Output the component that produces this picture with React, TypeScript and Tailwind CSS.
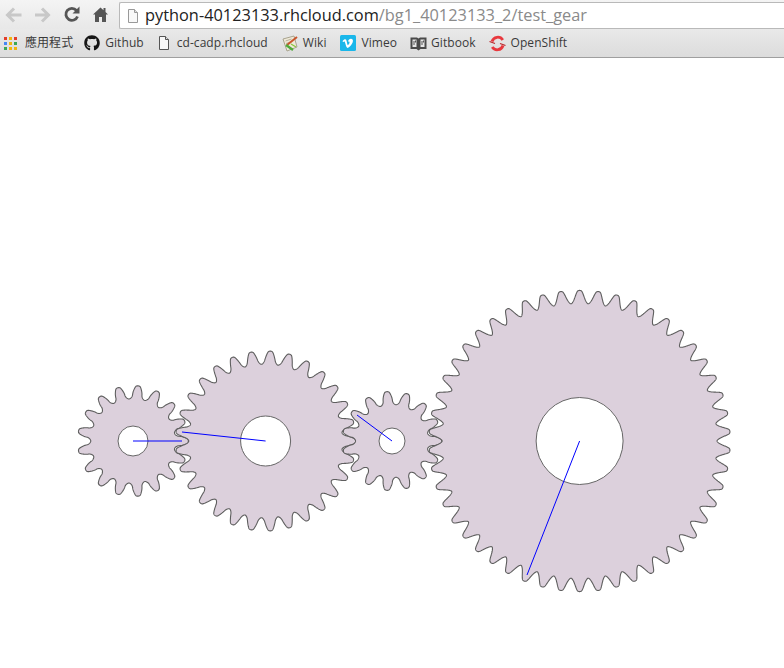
import React from "react";
import { FaGithub } from "react-icons/fa";

const m = 5.77;
const cy = 441 - 58;

function chaikin(pts: number[][], iterations: number) {
  let p = pts;
  for (let k = 0; k < iterations; k++) {
    const q: number[][] = [];
    for (let i = 0; i < p.length; i++) {
      const a = p[i];
      const b = p[(i + 1) % p.length];
      q.push([a[0] * 0.75 + b[0] * 0.25, a[1] * 0.75 + b[1] * 0.25]);
      q.push([a[0] * 0.25 + b[0] * 0.75, a[1] * 0.25 + b[1] * 0.75]);
    }
    p = q;
  }
  return p;
}

function gearPath(cx: number, N: number, phaseDeg: number) {
  const r = (N * m) / 2;
  const ro = r + m + 0.6;
  const rr = r - 1.3 * m;
  const pitch = (2 * Math.PI) / N;
  const base = N < 20 ? 0.29 : N < 40 ? 0.33 : 0.36;
  const flank: number[][] = [
    [r - 0.8 * m, pitch * base],
    [r - 0.1 * m, pitch * 0.26],
    [r + 0.65 * m, pitch * 0.17],
    [ro, pitch * 0.09],
  ];
  const pts: number[][] = [];
  for (let t = 0; t < N; t++) {
    const c = (phaseDeg * Math.PI) / 180 + t * pitch;
    pts.push([rr, c - pitch / 2]);
    flank.forEach(([R, a]) => pts.push([R, c - a]));
    [...flank].reverse().forEach(([R, a]) => pts.push([R, c + a]));
  }
  const xy = pts.map(([R, a]) => [cx + R * Math.cos(a), cy + R * Math.sin(a)]);
  const s = chaikin(xy, 3);
  return "M" + s.map((q) => q[0].toFixed(2) + " " + q[1].toFixed(2)).join("L") + "Z";
}

const gears = [
  { cx: 133, n: 17, phase: 0, hole: 15, end: [182, 441] },
  { cx: 265.6, n: 29, phase: 0, hole: 25, end: [182, 432] },
  { cx: 392, n: 15, phase: 0, hole: 13, end: [357, 415] },
  { cx: 579.6, n: 50, phase: 3.6, hole: 43.5, end: [527, 575] },
];

function AppsIcon() {
  const c = ["#e33e2b", "#f2b50f", "#e33e2b", "#4486f4", "#f2b50f", "#3aa757", "#3aa757", "#f2b50f", "#f2b50f"];
  return (
    <div className="ml-[1px] grid grid-cols-3 gap-[2px] w-[13px] h-[13px]">
      {c.map((x, i) => (
        <div key={i} style={{ background: x }} className="w-[3px] h-[3px]" />
      ))}
    </div>
  );
}

function FileIcon({ stroke = "#555" }: { stroke?: string }) {
  return (
    <svg width="12" height="16" viewBox="0 0 12 16">
      <path d="M1.500 1.500h6l3 3v10h-9z" fill="#f8f8f8" stroke={stroke} />
      <path d="M7.500 1.500v3h3" fill="#ddd" stroke={stroke} />
    </svg>
  );
}

function WikiIcon() {
  return (
    <svg width="17" height="17" viewBox="0 0 17 17">
      <path d="M1 4l11-3 3 11-10 4z" fill="#efe9d8" stroke="#a9a48f" />
      <path d="M3.500 6l6-2M4 8.500l4-1.300" stroke="#b9b39d" />
      <path d="M5 10L15 2" stroke="#c9552c" strokeWidth="2" />
      <path d="M4 10l7 5" stroke="#4faa3a" strokeWidth="2.400" fill="none" />
      <path d="M9 9l5 3" stroke="#8cc63f" strokeWidth="1.400" fill="none" />
    </svg>
  );
}

function VimeoIcon() {
  return (
    <svg width="16" height="16" viewBox="0 0 16 16">
      <rect width="16" height="16" rx="1.500" fill="#1ab7ea" />
      <path d="M2.500 6.200l.6.800c.8-.6 1.300-.8 1.600-.4.6 1.500 1 3.600 1.700 5.200.5 1.200 1.200 1.400 2.100.8 1.900-1.300 3.400-3.200 4.200-5.400.7-1.900-.1-3.400-1.800-3.400-1.400 0-2.500 1.100-3 3 1-.6 1.800-.3 1.600.9-.1.700-1 2.100-1.500 2.400-.6.300-.9-1.900-1.200-3.300-.4-2-.8-2.700-2-2.500-.8.200-1.600 1.200-2.300 1.900z" fill="#fff" />
    </svg>
  );
}

function BookIcon() {
  return (
    <svg width="17" height="15" viewBox="0 0 17 15">
      <path d="M0.500 1.500h6.500l1.500 1 1.500-1h6.500V13h-6l-2 1.500-2-1.500h-6z" fill="#4a4a4a" />
      <path d="M2.500 3.500h4v7.500h-4zM10.500 3.500h4v7.500h-4z" fill="#e6e6e6" />
      <path d="M4 5v4M5.500 4.500v2M12 5v4M13.500 4.500v2" stroke="#555" />
    </svg>
  );
}

function ShiftIcon() {
  return (
    <svg width="17" height="17" viewBox="0 0 17 17" fill="none">
      <path d="M3 6.500A6 6 0 0 1 13.800 5" stroke="#e8383e" strokeWidth="2.800" />
      <path d="M14 10.500A6 6 0 0 1 3.200 12" stroke="#e8383e" strokeWidth="2.800" />
      <path d="M0.500 6.500l5.500 2M16.500 10.500l-5.500-2" stroke="#b9252a" strokeWidth="1.300" />
    </svg>
  );
}

function Bookmark({ icon, label, gap, after }: { icon: React.ReactNode; label: string; gap: string; after: string }) {
  return (
    <div className={"flex items-center " + after}>
      {icon}
      <span className={"text-[12px] leading-none tracking-[0.06px] text-[#3a3a3a] whitespace-nowrap " + gap}>{label}</span>
    </div>
  );
}

export default function App() {
  return (
    <div className="w-[784px] h-[668px] overflow-hidden bg-white flex flex-col font-['Open_Sans','Noto_Sans_CJK_TC',sans-serif]">
      <div className="h-[29px] flex items-start pt-[2px] bg-gradient-to-b from-[#f4f4f4] to-[#e8e8e8] shrink-0">
        <svg width="119" height="27" viewBox="0 0 119 27" className="shrink-0">
          <path d="M21.500 13H8M14 6.500L7.500 13l6.500 6.500" fill="none" stroke="#c8c8c8" strokeWidth="3" />
          <path d="M35 13h13.500M42 6.500l6.500 6.500-6.500 6.500" fill="none" stroke="#c8c8c8" strokeWidth="3" />
          <path d="M76.500 8.500A6 6 0 1 0 77.500 14.500" fill="none" stroke="#555" strokeWidth="2.800" />
          <path d="M72.500 11.500h7V4.500z" fill="#555" />
          <path d="M100.500 5.500l-7.500 7h2v7.500h4v-5h3v5h4v-7.500h2l-2.500-2.400V6h-2v2.300z" fill="#555" />
        </svg>
        <div className="flex-1 h-[27px] bg-white border border-[#b9b9b9] border-r-0 rounded-l-[2px] flex items-center pl-[7px]">
          <FileIcon stroke="#999" />
          <span className="ml-[6px] text-[16.35px] leading-none whitespace-nowrap text-[#222]">
            python-40123133.rhcloud.com<span className="text-[#8a8a8a]">/bg1_40123133_2/test_gear</span>
          </span>
        </div>
      </div>
      <div className="h-[29px] flex items-center bg-gradient-to-b from-[#e9e9e9] to-[#dcdcdc] border-b border-[#9f9f9f] shrink-0 pl-[3px]">
        <Bookmark icon={<AppsIcon />} label="應用程式" gap="ml-[8px]" after="mr-[11px]" />
        <Bookmark icon={<FaGithub size={16} className="text-[#161616]" />} label="Github" gap="ml-[5px]" after="mr-[14px]" />
        <Bookmark icon={<FileIcon />} label="cd-cadp.rhcloud" gap="ml-[7px]" after="mr-[14px]" />
        <Bookmark icon={<WikiIcon />} label="Wiki" gap="ml-[4px]" after="mr-[14px]" />
        <Bookmark icon={<VimeoIcon />} label="Vimeo" gap="ml-[5px]" after="mr-[13px]" />
        <Bookmark icon={<BookIcon />} label="Gitbook" gap="ml-[4px]" after="mr-[13px]" />
        <Bookmark icon={<ShiftIcon />} label="OpenShift" gap="ml-[5px]" after="" />
      </div>
      <svg width="784" height="610" viewBox="0 0 784 610" className="block shrink-0">
        {gears.map((g) => (
          <g key={g.n}>
            <path d={gearPath(g.cx, g.n, g.phase)} fill="#dcd0dc" stroke="#5e5e5e" strokeWidth="1.100" />
            <circle cx={g.cx} cy={cy} r={g.hole} fill="#fff" stroke="#666" strokeWidth="1" />
          </g>
        ))}
        {gears.map((g) => (
          <line key={g.n} x1={g.cx} y1={cy} x2={g.end[0]} y2={g.end[1] - 58} stroke="#0000ff" strokeWidth="1" />
        ))}
      </svg>
    </div>
  );
}
